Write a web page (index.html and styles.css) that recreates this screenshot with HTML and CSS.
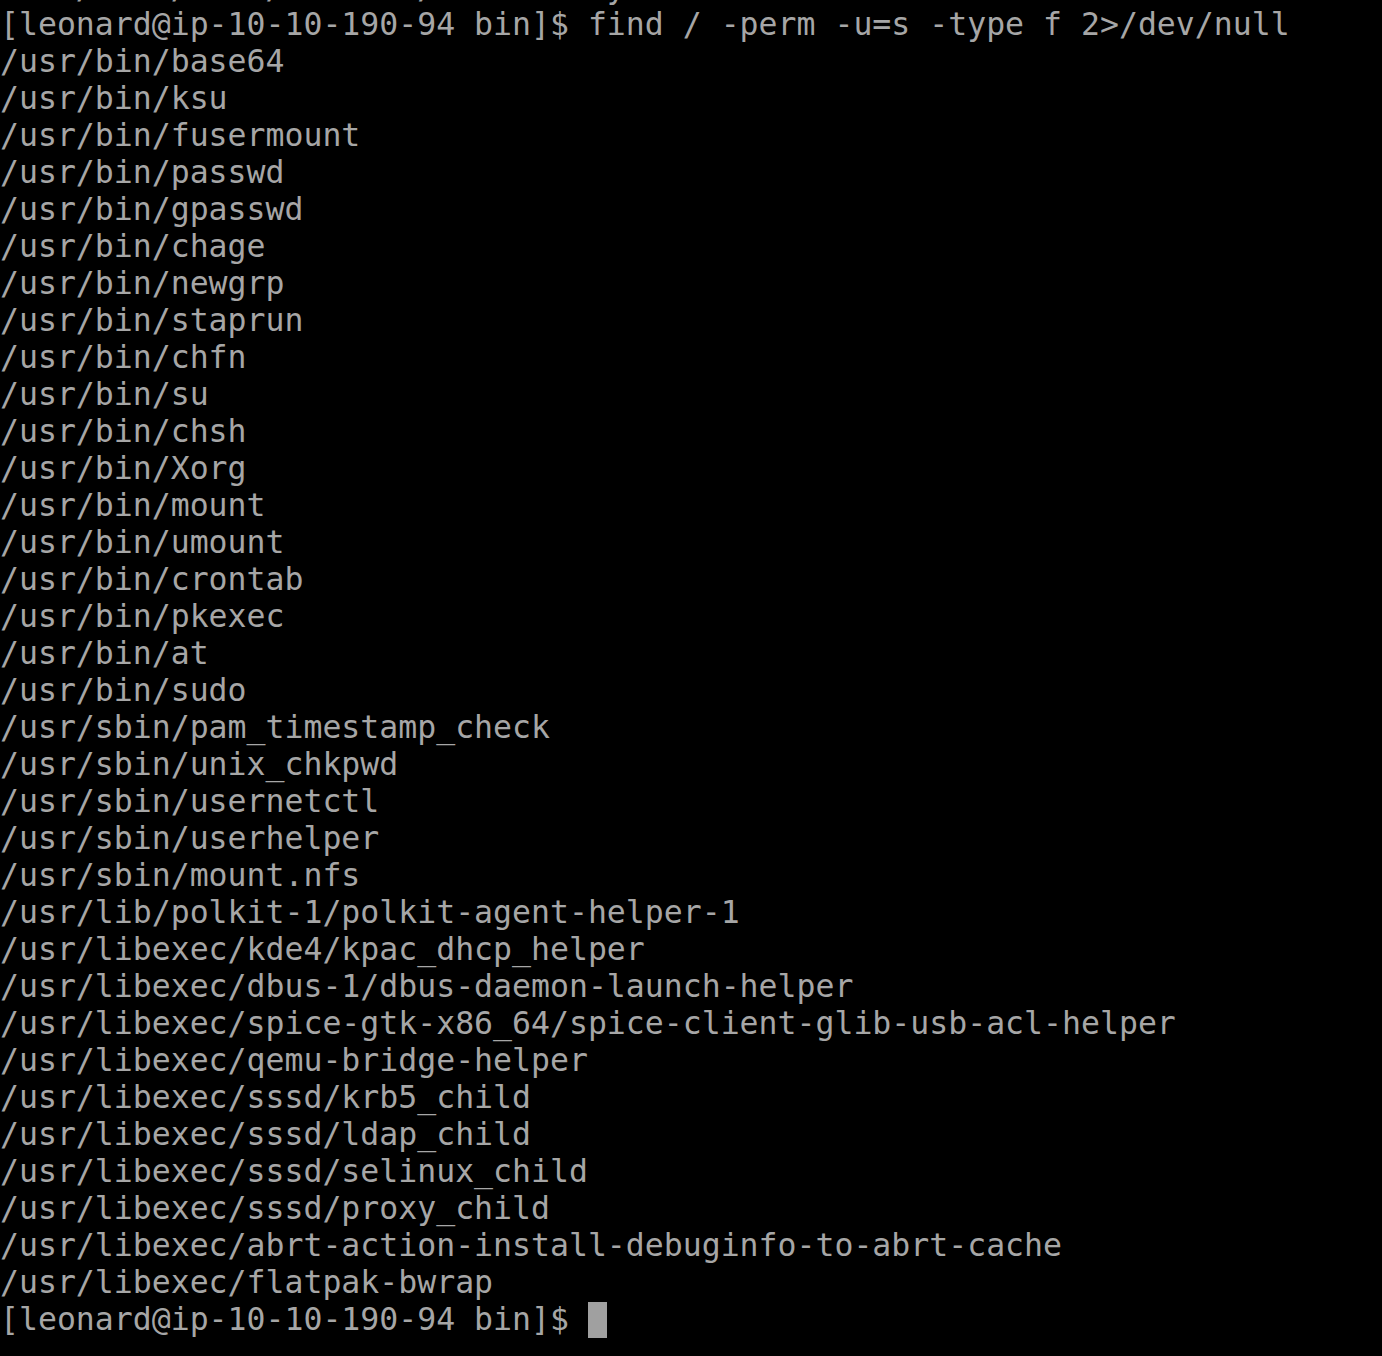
FILE: index.html
```html
<!DOCTYPE html>
<html>
<head>
<meta charset="utf-8">
<link rel="stylesheet" href="styles.css">
</head>
<body>
<pre class="term"><span class="prev">    /    /    /       /         y</span>
[leonard@ip-10-10-190-94 bin]$ find / -perm -u=s -type f 2&gt;/dev/null
/usr/bin/base64
/usr/bin/ksu
/usr/bin/fusermount
/usr/bin/passwd
/usr/bin/gpasswd
/usr/bin/chage
/usr/bin/newgrp
/usr/bin/staprun
/usr/bin/chfn
/usr/bin/su
/usr/bin/chsh
/usr/bin/Xorg
/usr/bin/mount
/usr/bin/umount
/usr/bin/crontab
/usr/bin/pkexec
/usr/bin/at
/usr/bin/sudo
/usr/sbin/pam_timestamp_check
/usr/sbin/unix_chkpwd
/usr/sbin/usernetctl
/usr/sbin/userhelper
/usr/sbin/mount.nfs
/usr/lib/polkit-1/polkit-agent-helper-1
/usr/libexec/kde4/kpac_dhcp_helper
/usr/libexec/dbus-1/dbus-daemon-launch-helper
/usr/libexec/spice-gtk-x86_64/spice-client-glib-usb-acl-helper
/usr/libexec/qemu-bridge-helper
/usr/libexec/sssd/krb5_child
/usr/libexec/sssd/ldap_child
/usr/libexec/sssd/selinux_child
/usr/libexec/sssd/proxy_child
/usr/libexec/abrt-action-install-debuginfo-to-abrt-cache
/usr/libexec/flatpak-bwrap
[leonard@ip-10-10-190-94 bin]$ <span class="cursor"></span></pre>
</body>
</html>
```
FILE: styles.css
```css
html, body {
  margin: 0;
  padding: 0;
  background: #000;
  height: 100%;
  overflow: hidden;
}
.term {
  margin: 0;
  margin-top: -31px;
  padding: 0;
  font-family: "DejaVu Sans Mono", monospace;
  font-size: 31.5px;
  line-height: 37px;
  color: #a6a6a6;
  white-space: pre;
}
.prev {
  color: #a6a6a6;
}
.cursor {
  display: inline-block;
  width: 19px;
  height: 36px;
  background: #a0a0a0;
  vertical-align: -8px;
}
```
